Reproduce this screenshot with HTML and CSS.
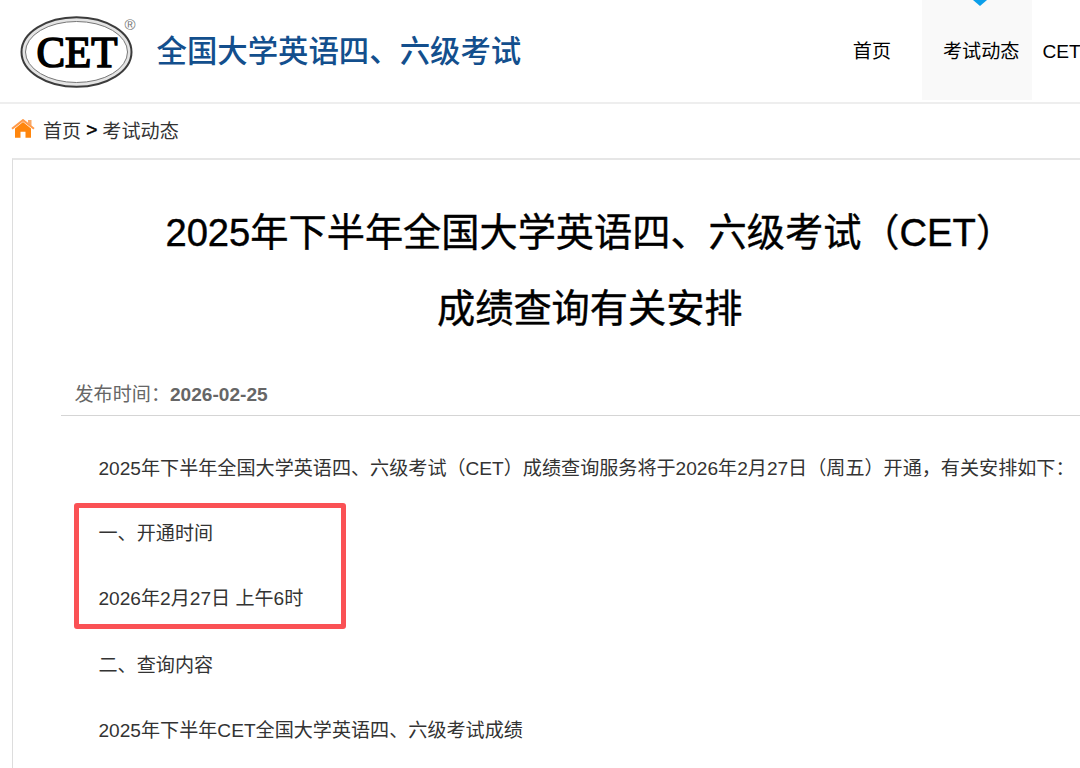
FILE: index.html
```html
<!DOCTYPE html>
<html lang="zh-CN">
<head>
  <meta charset="UTF-8" />
  <title>全国大学英语四、六级考试</title>
  <link rel="stylesheet" href="styles.css">
</head>
<body>

  <div class="header">
    <a class="logo" href="#">
      <svg class="logo-mark" width="120" height="76" viewBox="0 0 120 76">
        <ellipse cx="56.5" cy="38" rx="55" ry="34.8" fill="#e4e4e4" stroke="#3c3c3c" stroke-width="2" />
        <ellipse cx="56.5" cy="38" rx="51" ry="30.500" fill="#fff" stroke="#777" stroke-width="1" />
        <text class="logo-cet" x="16.500" y="52.500" textLength="81" lengthAdjust="spacingAndGlyphs">CET</text>
        <text class="logo-reg" x="104.5" y="16">®</text>
      </svg>
      <span class="logo-text">全国大学英语四、六级考试</span>
    </a>
    <div class="nav">
      <a class="nav-home" href="#">首页</a>
      <a class="nav-news active" href="#">考试动态</a>
      <a class="nav-cet" href="#">CET</a>
    </div>
  </div>

  <div class="crumbs">
    <svg class="home-icon" width="24" height="20" viewBox="0 0 24 20">
      <path d="M17 1h3.500v6l-3.500-3z" fill="#f9a765" />
      <path d="M4 9.500L12 3l8 6.500V18.800h-5.500v-6H9.500v6H4z" fill="#ff860d" />
      <path d="M1 9.700L12 1.100l11 8.600" fill="none" stroke="#ff9a4a" stroke-width="2" />
    </svg>
    <a href="#">首页</a>
    <span class="sep">&gt;</span>
    <a href="#">考试动态</a>
  </div>

  <div class="article">
    <h1>2025年下半年全国大学英语四、六级考试（CET）<br>成绩查询有关安排</h1>
    <div class="info">发布时间：<b>2026-02-25</b></div>
    <div class="content">
      <p>2025年下半年全国大学英语四、六级考试（CET）成绩查询服务将于2026年2月27日（周五）开通，有关安排如下：</p>
      <div class="mark">
        <p>一、开通时间</p>
        <p>2026年2月27日 上午6时</p>
      </div>
      <p>二、查询内容</p>
      <p>2025年下半年CET全国大学英语四、六级考试成绩</p>
    </div>
  </div>

</body>
</html>
```
FILE: styles.css
```css
html, body {
  margin: 0;
  padding: 0;
  height: 768px;
  overflow: hidden;
  background: #fff;
  font-family: "Liberation Sans", "Noto Sans CJK SC", sans-serif;
  font-size: 19.1px;
  color: #333;
}

a {
  color: inherit;
  text-decoration: none;
}

.header {
  display: flex;
  justify-content: space-between;
  box-sizing: border-box;
  height: 104px;
  border-bottom: 2px solid #eee;
}

.logo {
  display: flex;
  align-items: center;
  height: 102px;
  padding-left: 20px;
}

.logo-mark {
  margin-top: 2px;
}

.logo-cet {
  font-family: "Liberation Serif", serif;
  font-size: 45px;
  fill: #000;
  stroke: #000;
  stroke-width: 1.7px;
}

.logo-reg {
  font-size: 15px;
  fill: #777;
}

.logo-text {
  margin-left: 16.5px;
  font-size: 30.4px;
  font-weight: 500;
  line-height: 102px;
  color: #134f8d;
  white-space: nowrap;
}

.nav {
  display: flex;
  color: #000;
  line-height: 104px;
  white-space: nowrap;
}

.nav a {
  height: 100px;
}

.nav-home {
  padding: 0 31px;
}

.nav-news {
  position: relative;
  box-sizing: border-box;
  width: 110px;
  padding-left: 21px;
}

.nav-cet {
  box-sizing: border-box;
  width: 48px;
  padding-left: 10.5px;
}

.nav .active {
  background: #f9f9f9;
}

/* blue arrow above the current item */
.nav .active::before {
  content: "";
  position: absolute;
  top: 0;
  left: 51px;
  border: 7px solid transparent;
  border-top: 6px solid #0c9fea;
  border-bottom: 0;
}

.crumbs {
  display: flex;
  align-items: center;
  box-sizing: border-box;
  height: 54px;
  padding: 0 0 2px 11px;
}

.home-icon {
  margin: -3px 8px 0 0;
}

.sep {
  margin: 0 5px;
  color: #000;
  -webkit-text-stroke: 0.5px #000;
}

.article {
  box-sizing: border-box;
  height: 620px;
  padding: 35px 0 0 48px;
  border-top: 2px solid #e6e6e6;
  border-left: 1px solid #ddd;
  margin-left: 11.5px;
}

h1 {
  padding-left: 39px;
  margin: 0;
  font-size: 38.2px;
  font-weight: 400;
  line-height: 76px;
  text-align: center;
  color: #000;
  -webkit-text-stroke: 0.4px #000;
}

.info {
  height: 41px;
  padding: 0 0 0 14px;
  margin-top: 27px;
  border-bottom: 1px solid #d5d5d5;
  line-height: 42px;
  color: #666;
}

.content {
  padding: 20px 0 0 38px;
}

.content p {
  margin: 0;
  line-height: 65.5px;
  white-space: nowrap;
}

.mark {
  box-sizing: border-box;
  width: 272px;
  height: 126px;
  padding-left: 20px;
  border: 5px solid #fa5155;
  border-radius: 3px;
  margin: 1px 0 4px -25px;
}

.mark p:first-child {
  margin-top: -7px;
}
```
